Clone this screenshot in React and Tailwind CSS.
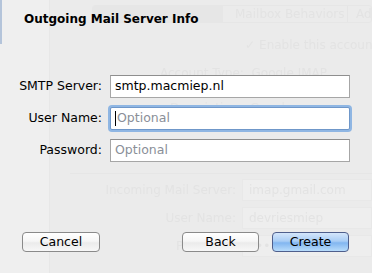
import { useState } from "react";

const font = { fontFamily: '"DejaVu Sans", "Lucida Grande", Verdana, sans-serif' };

// faint window content that shows through the sheet
const Backdrop = () => (
  <div className="absolute inset-0 flex blur-[0.6px] text-[12px] text-[#e3e3e3] whitespace-nowrap overflow-hidden" style={font}>
    <div className="w-[50px] shrink-0 bg-[#efefef] border-r border-[#e7e7e7]">
      <div className="w-[2px] h-[44px] bg-[#b4c4da]"></div>
    </div>
    <div className="flex-1 min-w-0 flex flex-col">
      <div className="flex items-center h-[18px] mt-[5px] ml-[42px] border border-[#e6e6e6] rounded-[3px] overflow-hidden">
        <div className="w-[130px] shrink-0 h-full bg-[#e6e6e6]"></div>
        <div className="w-[125px] shrink-0 h-full flex items-center pl-[12px] border-r border-[#e5e5e5]">Mailbox Behaviors</div>
        <div className="pl-[8px]">Advanced</div>
      </div>
      <div className="mt-[13px] ml-[195px] flex items-center gap-[4px]">
        <span>✓</span> Enable this account
      </div>
      <div className="mt-[10px] ml-[110px]">Account Type:&nbsp;&nbsp;Google IMAP</div>
      <div className="mt-[17px] ml-[120px]">Description:&nbsp;&nbsp;Google</div>
      <div className="mt-[56px] ml-[20px] border-t border-[#e6e6e6]"></div>
      <div className="mt-[5px] flex items-center gap-[6px]">
        <div className="w-[186px] shrink-0 text-right">Incoming Mail Server:</div>
        <div className="flex-1 h-[22px] border border-[#e8e8e8] bg-[#eeeeee] pl-[6px] leading-[20px]">imap.gmail.com</div>
      </div>
      <div className="mt-[6px] flex items-center gap-[6px]">
        <div className="w-[186px] shrink-0 text-right">User Name:</div>
        <div className="flex-1 h-[22px] border border-[#e8e8e8] bg-[#eeeeee] pl-[6px] leading-[20px]">devriesmiep</div>
      </div>
      <div className="mt-[6px] flex items-center gap-[6px]">
        <div className="w-[186px] shrink-0 text-right">Password:</div>
        <div className="flex-1 h-[22px] border border-[#e8e8e8] bg-[#eeeeee] pl-[6px] leading-[20px]">••••••••</div>
      </div>
    </div>
  </div>
);

const Field = ({ label, value, placeholder, focused }) => (
  <div className="flex items-center">
    <div className="w-[104px] text-right pr-[2px] text-[12.5px] text-black">{label}</div>
    <div
      className={`ml-[6px] w-[240px] h-[23px] bg-white flex items-center pl-[4px] text-[12.5px] ${
        focused
          ? "border border-[#6f97c9] shadow-[0_0_0_2px_#8fb6e3] rounded-[2px]"
          : "border border-[#a6a6a6] border-t-[#8e8e8e]"
      }`}
    >
      {focused && <span className="w-px h-[15px] bg-black mr-[1px]"></span>}
      {value ? (
        <span className="text-black">{value}</span>
      ) : (
        <span className="text-[#8a8f98]">{placeholder}</span>
      )}
    </div>
  </div>
);

const Button = ({ children, primary, className = "" }) => (
  <button
    className={`h-[20px] rounded-[4px] border text-[12.5px] text-black leading-none flex items-center justify-center ${
      primary
        ? "border-[#4f5f8c] bg-[linear-gradient(to_bottom,#d4e6fb_0%,#a9cdf5_45%,#82b6f0_55%,#b8dcfb_100%)]"
        : "border-[#8a8a8a] bg-[linear-gradient(to_bottom,#ffffff_0%,#f6f6f6_45%,#ebebeb_55%,#f7f7f7_100%)]"
    } ${className}`}
  >
    {children}
  </button>
);

export default function App() {
  const [smtp] = useState("smtp.macmiep.nl");

  return (
    <div className="relative w-[372px] h-[273px] bg-[#ebebeb] overflow-hidden" style={font}>
      <Backdrop />
      <div className="relative flex flex-col h-full">
        <h1 className="mt-[11px] ml-[24px] text-[12px] font-bold leading-[16px] text-black">Outgoing Mail Server Info</h1>
        <div className="mt-[48px] flex flex-col gap-[9px]">
          <Field label="SMTP Server:" value={smtp} />
          <Field label="User Name:" placeholder="Optional" focused />
          <Field label="Password:" placeholder="Optional" />
        </div>
        <div className="mt-auto mb-[21px] flex items-center pl-[22px]">
          <Button className="w-[78px]">Cancel</Button>
          <Button className="w-[77px] ml-[82px]">Back</Button>
          <Button primary className="w-[77px] ml-[13px]">Create</Button>
        </div>
      </div>
    </div>
  );
}
